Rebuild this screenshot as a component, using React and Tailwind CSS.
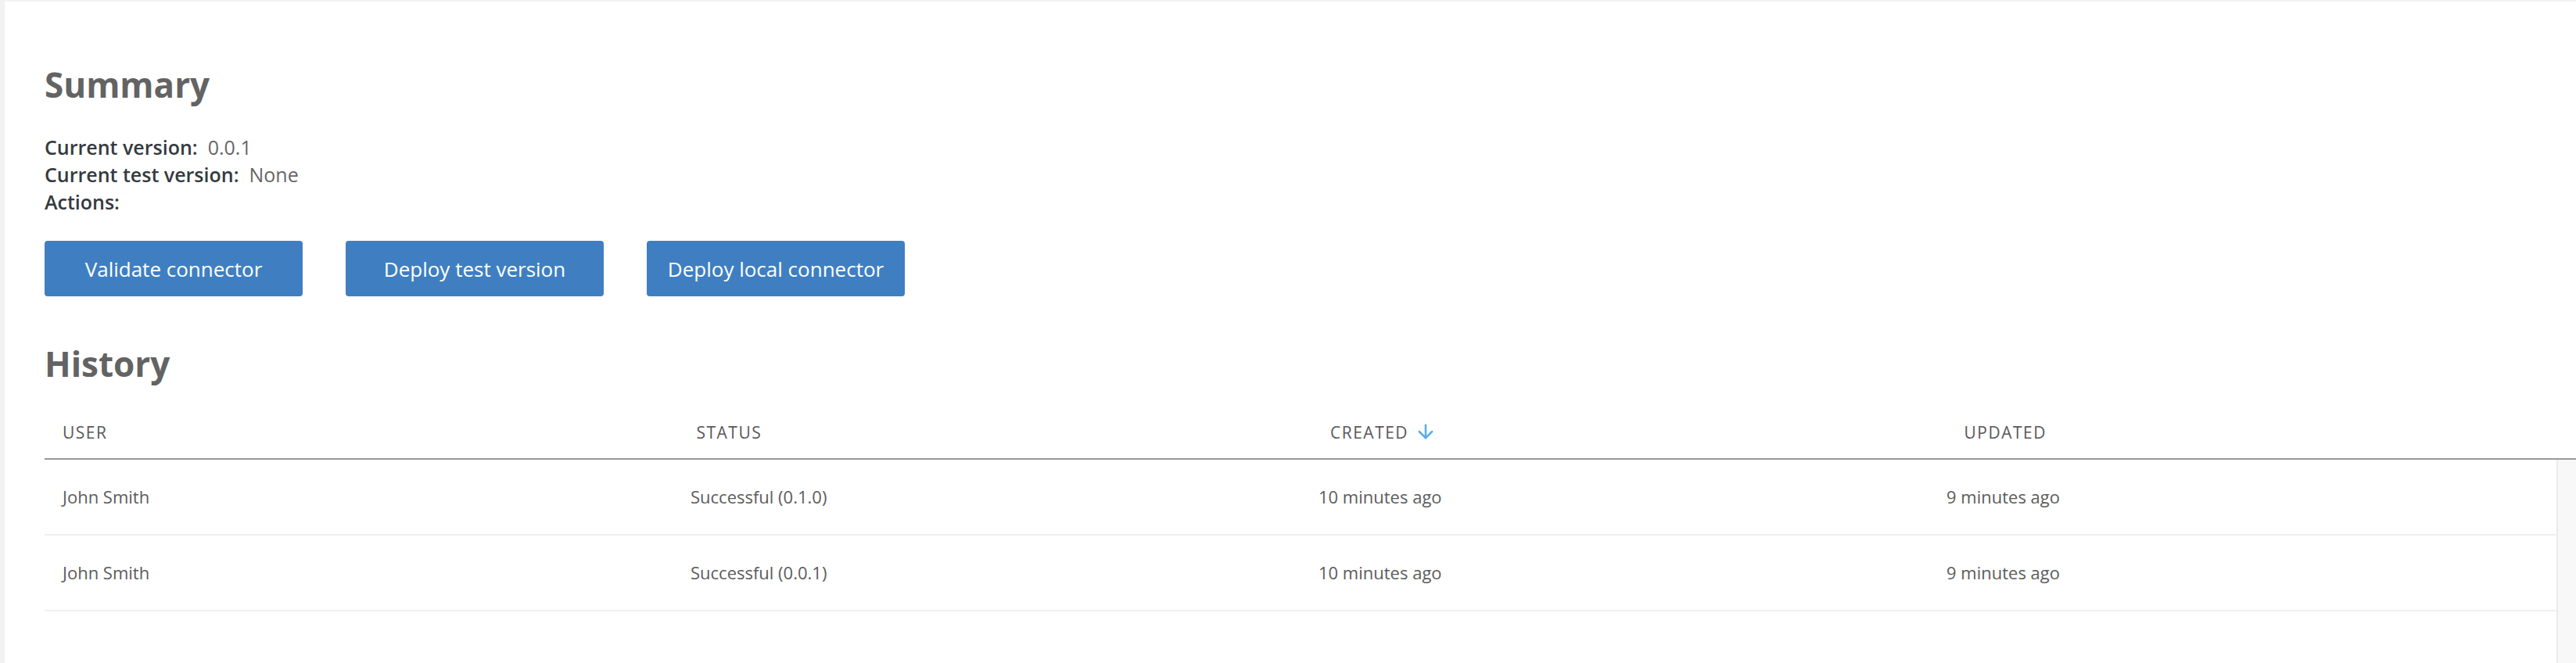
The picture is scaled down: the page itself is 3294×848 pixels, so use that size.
import { ArrowDown } from 'lucide-react';

const rows = [
  { user: 'John Smith', status: 'Successful (0.1.0)', created: '10 minutes ago', updated: '9 minutes ago' },
  { user: 'John Smith', status: 'Successful (0.0.1)', created: '10 minutes ago', updated: '9 minutes ago' },
];

const font = { fontFamily: '"Open Sans", "Liberation Sans", sans-serif' };

function ActionButton({ children }) {
  return (
    <button className="w-[330px] h-[71px] rounded-[4px] bg-[#3f7fc1] text-white text-[26px] leading-none flex items-center justify-center">
      {children}
    </button>
  );
}

export default function App() {
  return (
    <div className="h-screen w-full bg-[#f2f2f2] pt-[2px] pl-[6px] overflow-hidden" style={font}>
      <div className="h-full bg-white pl-[51px] flex flex-col overflow-hidden">
        <h2 className="mt-[80px] text-[44px] leading-[53px] font-bold text-[#636363]">Summary</h2>

        <div className="mt-[36px] text-[25px] leading-[35px] text-[#666]">
          <div>
            <span className="font-semibold text-[#343a40]">Current version:</span>
            <span className="ml-[13px]">0.0.1</span>
          </div>
          <div>
            <span className="font-semibold text-[#343a40]">Current test version:</span>
            <span className="ml-[13px]">None</span>
          </div>
          <div>
            <span className="font-semibold text-[#343a40]">Actions:</span>
          </div>
        </div>

        <div className="mt-[32px] flex gap-[55px]">
          <ActionButton>Validate connector</ActionButton>
          <ActionButton>Deploy test version</ActionButton>
          <ActionButton>Deploy local connector</ActionButton>
        </div>

        <h2 className="mt-[60px] text-[44px] leading-[53px] font-bold text-[#636363]">History</h2>

        {/* header row is a bit wider than the body: body leaves room for the scrollbar */}
        <div className="mt-[47px] border-b-2 border-[#999] w-[3300px]">
          <div className="grid grid-cols-[repeat(4,810.5px)] text-[21px] leading-[29px] tracking-[1.5px] text-[#585858] uppercase">
            <div className="px-[23px] pb-[18px]">User</div>
            <div className="px-[23px] pb-[18px]">Status</div>
            <div className="px-[23px] pb-[18px] flex items-start gap-[8px]">
              <span>Created</span>
              <ArrowDown size={28} strokeWidth={2.2} className="text-[#5aaee6] -mt-[1px]" />
            </div>
            <div className="px-[23px] pb-[18px]">Updated</div>
          </div>
        </div>

        <div className="flex-1 flex">
          <div className="w-[3212px] shrink-0">
            {rows.map((r, i) => (
              <div
                key={i}
                className="grid grid-cols-[repeat(4,803px)] h-[97px] items-center border-b-2 border-[#efefef] text-[22px] text-[#5c5c5c]"
              >
                <div className="px-[23px]">{r.user}</div>
                <div className="px-[23px]">{r.status}</div>
                <div className="px-[23px]">{r.created}</div>
                <div className="px-[23px]">{r.updated}</div>
              </div>
            ))}
          </div>
          <div className="flex-1 bg-[#f8f8f8] border-l-2 border-[#ebebeb]" />
        </div>
      </div>
    </div>
  );
}
